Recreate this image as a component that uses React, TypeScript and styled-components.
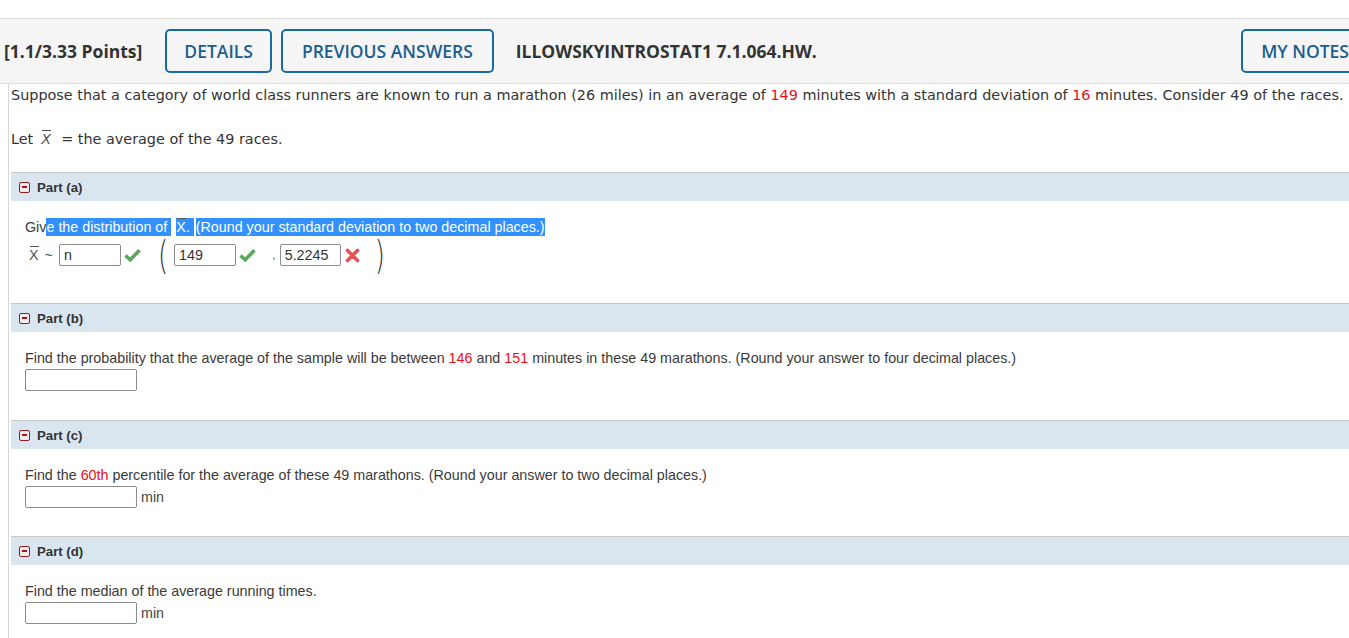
import React from "react";
import styled, { createGlobalStyle } from "styled-components";

const GlobalStyle = createGlobalStyle`
  html, body { margin: 0; padding: 0; background: #fff; overflow: hidden; }
  body { font-family: "Liberation Sans", Arial, sans-serif; color: #333; }
  * { box-sizing: border-box; }
`;

const Page = styled.div`
  padding-top: 18px;
  width: 1349px;
  height: 638px;
  overflow: hidden;
`;

const HeaderBar = styled.div`
  display: flex;
  align-items: center;
  height: 66px;
  background: #f5f5f5;
  border-top: 1px solid #dcdcdc;
  border-bottom: 1px solid #dcdcdc;
  padding-left: 4px;
  font-family: "Open Sans", sans-serif;
  white-space: nowrap;
`;

const Points = styled.span`
  font-size: 17.5px;
  font-weight: 700;
  color: #333;
  margin-right: 23px;
`;

const OutlineButton = styled.button<{ $gap?: number; $pad?: number }>`
  height: 44px;
  padding: 0 ${(p) => p.$pad ?? 18}px;
  border: 2px solid #1a6aa2;
  border-radius: 5px;
  background: transparent;
  color: #1b5f90;
  font-family: "Open Sans", sans-serif;
  font-size: 17.5px;
  font-weight: 600;
  flex-shrink: 0;
  margin-right: ${(p) => p.$gap ?? 0}px;
`;

const Code = styled.span`
  flex: 1;
  font-size: 17.5px;
  font-weight: 700;
  color: #333;
`;

const Question = styled.div`
  margin-left: 8px;
  border-left: 1px solid #d8d8d8;
  padding-left: 2px;
`;

const Intro = styled.p<{ $after: number }>`
  margin: 0 0 ${(p) => p.$after}px;
  font-family: "DejaVu Sans", Verdana, sans-serif;
  font-size: 14.4px;
  line-height: 20px;
  color: #333;
  white-space: nowrap;
`;

const FirstIntro = styled(Intro)`
  padding-top: 1px;
`;

const Red = styled.span`
  color: #e8101a;
`;

const BarX = styled.span<{ $italic?: boolean }>`
  display: inline-block;
  position: relative;
  font-style: ${(p) => (p.$italic ? "italic" : "normal")};
  color: #555;
  &::before {
    content: "";
    position: absolute;
    left: 1px;
    right: 0;
    top: 1px;
    border-top: 1px solid #555;
  }
`;

const LetX = styled(BarX)`
  margin: 0 10px 0 8px;
`;

const RowX = styled(BarX)`
  margin-left: 4px;
`;

const Section = styled.section``;

const PartHeader = styled.div`
  display: flex;
  align-items: center;
  gap: 7px;
  height: 29px;
  padding-left: 8px;
  background: #d9e5ef;
  border-top: 1px solid #c9c9c9;
  font-size: 13.2px;
  font-weight: 700;
  color: #333;
`;

const MinusBox = styled.span`
  display: inline-flex;
  align-items: center;
  justify-content: center;
  width: 11px;
  height: 11px;
  border: 1px solid #8b1f22;
  border-radius: 2px;
  background: #f4ecec;
  &::after {
    content: "";
    width: 5px;
    height: 2px;
    background: #a5181c;
  }
`;

const PartBody = styled.div<{ $bottom?: number }>`
  padding: 16px 14px ${(p) => p.$bottom ?? 29}px;
  font-size: 14.3px;
  line-height: 20px;
  color: #3a3a3a;
`;

const Prompt = styled.div`
  white-space: nowrap;
`;

const Sel = styled.span`
  background: #3390ff;
  color: #fff;
  padding: 1px 0 1px;
`;

const SelGap = styled.span<{ $w: number }>`
  display: inline-block;
  width: ${(p) => p.$w}px;
`;

const AnswerRow = styled.div`
  display: flex;
  align-items: center;
  height: 34px;
  margin-top: 1px;
`;

const Tilde = styled.span`
  margin: 0 6px;
  color: #555;
`;

const Field = styled.div<{ $w: number }>`
  width: ${(p) => p.$w}px;
  height: 22px;
  border: 1px solid #8c8c8c;
  border-radius: 2px;
  background: #fff;
  padding: 0 4px;
  font-size: 14.3px;
  line-height: 20px;
  color: #333;
  flex-shrink: 0;
`;

const Paren = styled.span<{ $l: number; $r: number }>`
  display: inline-block;
  font-family: "DejaVu Sans", sans-serif;
  font-weight: 200;
  font-size: 26px;
  line-height: 34px;
  color: #333;
  transform: scaleY(1.5);
  margin: 0 ${(p) => p.$r}px 0 ${(p) => p.$l}px;
`;

const Comma = styled.span`
  color: #666;
  margin: 0 4px 0 16px;
  font-size: 13px;
`;

const IconWrap = styled.span<{ $l: number; $r: number }>`
  display: inline-flex;
  margin: 0 ${(p) => p.$r}px 0 ${(p) => p.$l}px;
`;

const InputLine = styled.div`
  display: flex;
  align-items: center;
  gap: 4px;
  margin-top: 1px;
`;

const Unit = styled.span`
  font-size: 14.3px;
  color: #444;
`;

const Check = ({ l, r }: { l: number; r: number }) => (
  <IconWrap $l={l} $r={r}>
    <svg width="17" height="14" viewBox="0 0 17 14">
      <path d="M1.5 7.5 L6.2 11.8 L15.5 2.2" fill="none" stroke="#5aa95a" strokeWidth="3.6" strokeLinejoin="miter" />
    </svg>
  </IconWrap>
);

const Cross = () => (
  <IconWrap $l={4} $r={0}>
    <svg width="15" height="15" viewBox="0 0 15 15">
      <path d="M2.5 2.5 L12.5 12.5 M12.5 2.5 L2.5 12.5" stroke="#ea5054" strokeWidth="3.6" strokeLinecap="round" />
    </svg>
  </IconWrap>
);

export default function App() {
  return (
    <Page>
      <GlobalStyle />
      <HeaderBar>
        <Points>[1.1/3.33 Points]</Points>
        <OutlineButton $pad={17} $gap={9}>DETAILS</OutlineButton>
        <OutlineButton $pad={19} $gap={22}>PREVIOUS ANSWERS</OutlineButton>
        <Code>ILLOWSKYINTROSTAT1 7.1.064.HW.</Code>
        <OutlineButton $gap={-20}>MY NOTES</OutlineButton>
      </HeaderBar>
      <Question>
        <FirstIntro $after={24}>
          Suppose that a category of world class runners are known to run a marathon (26 miles) in an average of{" "}
          <Red>149</Red> minutes with a standard deviation of <Red>16</Red> minutes. Consider 49 of the races.
        </FirstIntro>
        <Intro $after={23}>
          Let<LetX $italic>X</LetX>= the average of the 49 races.
        </Intro>

        <Section>
          <PartHeader>
            <MinusBox />
            Part (a)
          </PartHeader>
          <PartBody $bottom={31}>
            <Prompt>
              Giv<Sel>e the distribution of </Sel>
              <SelGap $w={5} />
              <Sel>
                <BarX style={{ color: "#fff" }}>X</BarX>.&nbsp;
              </Sel>
              <SelGap $w={2} />
              <Sel>(Round your standard deviation to two decimal places.)</Sel>
            </Prompt>
            <AnswerRow>
              <RowX>X</RowX>
              <Tilde>~</Tilde>
              <Field $w={62}>n</Field>
              <Check l={3} r={0} />
              <Paren $l={17} $r={6}>(</Paren>
              <Field $w={62}>149</Field>
              <Check l={3} r={0} />
              <Comma>,</Comma>
              <Field $w={61}>5.2245</Field>
              <Cross />
              <Paren $l={15} $r={0}>)</Paren>
            </AnswerRow>
          </PartBody>
        </Section>

        <Section>
          <PartHeader>
            <MinusBox />
            Part (b)
          </PartHeader>
          <PartBody>
            <Prompt>
              Find the probability that the average of the sample will be between <Red>146</Red> and <Red>151</Red>{" "}
              minutes in these 49 marathons. (Round your answer to four decimal places.)
            </Prompt>
            <InputLine>
              <Field $w={112} />
            </InputLine>
          </PartBody>
        </Section>

        <Section>
          <PartHeader>
            <MinusBox />
            Part (c)
          </PartHeader>
          <PartBody $bottom={28}>
            <Prompt>
              Find the <Red>60th</Red> percentile for the average of these 49 marathons. (Round your answer to two
              decimal places.)
            </Prompt>
            <InputLine>
              <Field $w={112} />
              <Unit>min</Unit>
            </InputLine>
          </PartBody>
        </Section>

        <Section>
          <PartHeader>
            <MinusBox />
            Part (d)
          </PartHeader>
          <PartBody>
            <Prompt>Find the median of the average running times.</Prompt>
            <InputLine>
              <Field $w={112} />
              <Unit>min</Unit>
            </InputLine>
          </PartBody>
        </Section>
      </Question>
    </Page>
  );
}
